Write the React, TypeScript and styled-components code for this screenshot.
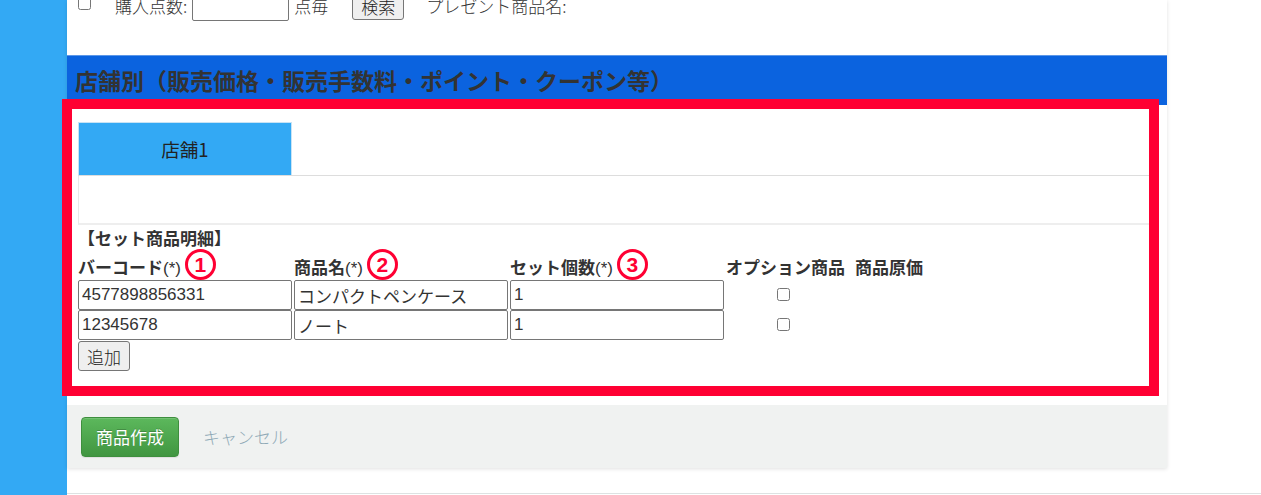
import React from "react";
import styled, { createGlobalStyle } from "styled-components";

const GlobalStyle = createGlobalStyle`
  html, body {
    margin: 0;
    padding: 0;
    background: #ffffff;
    overflow: hidden;
  }
  body {
    font-family: "Liberation Sans", "Noto Sans CJK JP", sans-serif;
    color: #333333;
  }
  * { box-sizing: border-box; }
`;

const Page = styled.div`
  position: relative;
  display: flex;
  min-height: 495px;
  height: 495px;
`;

const Sidebar = styled.aside`
  width: 67px;
  flex-shrink: 0;
  background: #33a9f4;
`;

const Main = styled.main`
  flex: 1;
  display: flex;
  flex-direction: column;
`;

const Panel = styled.section`
  width: 1100px;
  background: #ffffff;
  box-shadow: 0 1px 4px rgba(0, 0, 0, 0.12);
`;

const TopSection = styled.div`
  display: flex;
  align-items: flex-start;
  height: 55px;
  padding: 0 11px;
`;

const SearchRow = styled.div`
  display: flex;
  align-items: center;
  height: 30px;
  margin-top: -9px;
  font-size: 17px;
  font-family: "Noto Sans CJK JP", sans-serif;
  font-weight: 300;
  color: #333;
`;

const Check = styled.input.attrs({ type: "checkbox" })`
  width: 13px;
  height: 13px;
  margin: 0 0 6px 0;
`;

const RowText = styled.span<{ $before?: number }>`
  margin-left: ${(p) => p.$before ?? 5}px;
  line-height: 20px;
  white-space: nowrap;
`;

const SmallInput = styled.input`
  width: 97px;
  height: 29px;
  margin-left: 5px;
  border: 1px solid #767676;
  border-radius: 2px;
  font-size: 17px;
`;

const PlainButton = styled.button<{ $before?: number }>`
  margin-left: ${(p) => p.$before ?? 0}px;
  height: 27px;
  padding: 0 8px;
  font-size: 17px;
  font-family: "Noto Sans CJK JP", sans-serif;
  font-weight: 300;
  color: #222;
  background: #efefef;
  border: 1px solid #767676;
  border-radius: 3px;
  line-height: 1;
`;

const SectionHeader = styled.h2`
  margin: 0;
  height: 50px;
  display: flex;
  align-items: center;
  padding-left: 8px;
  background: #0b63df;
  border-top: 1px solid #5c97e8;
  font-family: "Noto Sans CJK JP", sans-serif;
  font-weight: 700;
  font-size: 23px;
  color: #333;
  line-height: 1;
`;

const Body = styled.div`
  padding: 17px 11px 34px;
`;

const TabNav = styled.div`
  display: flex;
  border-bottom: 1px solid #dddddd;
`;

const Tab = styled.div<{ $active?: boolean }>`
  width: 214px;
  height: 53px;
  display: flex;
  align-items: center;
  justify-content: center;
  background: ${(p) => (p.$active ? "#33a9f4" : "transparent")};
  border: 1px solid #c7e3f5;
  border-bottom: none;
  font-family: "Noto Sans CJK JP", sans-serif;
  font-size: 18.5px;
  color: #222;
`;

const TabPane = styled.div`
  height: 49px;
  border: 1px solid #e8e8e8;
  border-top: none;
  border-bottom: 2px solid #eeeeee;
`;

const SectionTitle = styled.div`
  padding-top: 3px;
  font-family: "Noto Sans CJK JP", sans-serif;
  font-weight: 700;
  font-size: 17px;
  line-height: 20px;
  color: #333;
`;

const DetailGrid = styled.div`
  display: grid;
  grid-template-columns: 214px 214px 214px max-content max-content;
  column-gap: 2px;
`;

const HeaderCell = styled.div<{ $pad?: number }>`
  display: flex;
  align-items: flex-end;
  height: 32px;
  padding-left: ${(p) => p.$pad ?? 0}px;
  font-weight: 700;
  font-size: 17px;
  line-height: 22px;
  color: #333;
  white-space: nowrap;
`;

const Req = styled.span`
  font-family: "Liberation Sans", sans-serif;
  font-weight: 400;
  font-size: 17px;
`;

const Badge = styled.span`
  flex-shrink: 0;
  width: 31px;
  height: 31px;
  margin-left: 4px;
  align-self: flex-start;
  margin-top: 1px;
  border: 3.5px solid #ff0033;
  border-radius: 50%;
  display: inline-flex;
  align-items: center;
  justify-content: center;
  color: #ff0033;
  font-family: "Liberation Sans", sans-serif;
  font-weight: 700;
  font-size: 21px;
  line-height: 1;
`;

const CellInput = styled.input`
  width: 100%;
  height: 30px;
  padding: 0 3px;
  border: 1px solid #767676;
  border-radius: 2px;
  font-family: "Liberation Sans", "Noto Sans CJK JP", sans-serif;
  font-size: 17px;
  color: #333;
  background: #fff;
`;

const CheckCell = styled.div`
  display: flex;
  align-items: center;
  justify-content: center;
  height: 30px;
`;

const RowCheck = styled.input.attrs({ type: "checkbox" })`
  width: 13px;
  height: 13px;
  margin: 0 4px 2px 0;
`;

const EmptyCell = styled.div``;

const AddButton = styled.button`
  margin-top: 1px;
  height: 30px;
  padding: 0 8px;
  font-family: "Noto Sans CJK JP", sans-serif;
  font-weight: 300;
  font-size: 17px;
  color: #222;
  background: #efefef;
  border: 1px solid #767676;
  border-radius: 3px;
  line-height: 1;
`;

const PanelFooter = styled.div`
  height: 63px;
  display: flex;
  align-items: center;
  gap: 24px;
  padding: 0 14px;
  background: #f0f2f1;
`;

const CreateButton = styled.button`
  width: 98px;
  height: 40px;
  border: 1px solid #3e8f3e;
  border-radius: 4px;
  background: linear-gradient(to bottom, #5cb85c 0%, #419641 100%);
  color: #ffffff;
  font-family: "Noto Sans CJK JP", sans-serif;
  font-size: 17px;
  text-shadow: 0 -1px 0 rgba(0, 0, 0, 0.2);
  box-shadow: inset 0 1px 0 rgba(255, 255, 255, 0.15), 0 1px 1px rgba(0, 0, 0, 0.075);
`;

const CancelLink = styled.span`
  font-family: "Noto Sans CJK JP", sans-serif;
  font-weight: 300;
  font-size: 17px;
  color: #8fa9b6;
`;

const Gap = styled.div`
  height: 25px;
`;

const PageFooter = styled.footer`
  flex: 1;
  border-top: 1px solid #dde2e2;
`;

const Highlight = styled.div`
  position: absolute;
  left: 62px;
  top: 99px;
  width: 1097px;
  height: 297px;
  border: 10px solid #ff0033;
  pointer-events: none;
`;

type Row = { code: string; name: string; qty: string };

const rows: Row[] = [
  { code: "4577898856331", name: "コンパクトペンケース", qty: "1" },
  { code: "12345678", name: "ノート", qty: "1" },
];

export default function App() {
  return (
    <>
      <GlobalStyle />
      <Page>
        <Sidebar />
        <Main>
          <Panel>
            <TopSection>
              <SearchRow>
                <Check />
                <RowText $before={24}>購入点数:</RowText>
                <SmallInput />
                <RowText>点毎</RowText>
                <PlainButton $before={24}>検索</PlainButton>
                <RowText $before={22}>プレゼント商品名:</RowText>
              </SearchRow>
            </TopSection>
            <SectionHeader>店舗別（販売価格・販売手数料・ポイント・クーポン等）</SectionHeader>
            <Body>
              <TabNav>
                <Tab $active>店舗1</Tab>
              </TabNav>
              <TabPane />
              <SectionTitle>【セット商品明細】</SectionTitle>
              <DetailGrid>
                <HeaderCell>
                  バーコード<Req>(*)</Req>
                  <Badge>1</Badge>
                </HeaderCell>
                <HeaderCell>
                  商品名<Req>(*)</Req>
                  <Badge>2</Badge>
                </HeaderCell>
                <HeaderCell>
                  セット個数<Req>(*)</Req>
                  <Badge>3</Badge>
                </HeaderCell>
                <HeaderCell>オプション商品</HeaderCell>
                <HeaderCell $pad={8}>商品原価</HeaderCell>
                {rows.map((r) => (
                  <React.Fragment key={r.code}>
                    <CellInput defaultValue={r.code} />
                    <CellInput defaultValue={r.name} />
                    <CellInput defaultValue={r.qty} />
                    <CheckCell>
                      <RowCheck />
                    </CheckCell>
                    <EmptyCell />
                  </React.Fragment>
                ))}
              </DetailGrid>
              <AddButton>追加</AddButton>
            </Body>
            <PanelFooter>
              <CreateButton>商品作成</CreateButton>
              <CancelLink>キャンセル</CancelLink>
            </PanelFooter>
          </Panel>
          <Gap />
          <PageFooter />
        </Main>
        <Highlight />
      </Page>
    </>
  );
}
